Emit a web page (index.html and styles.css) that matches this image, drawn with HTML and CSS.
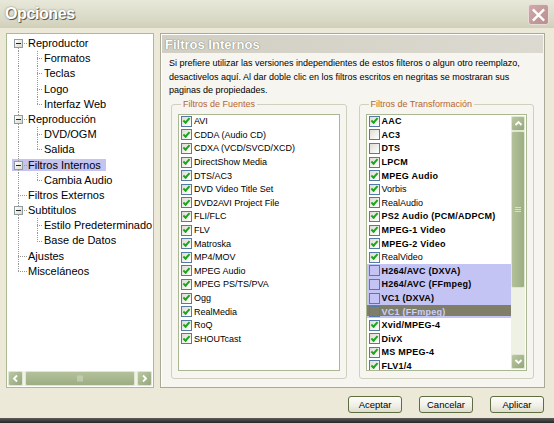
FILE: index.html
```html
<!DOCTYPE html>
<html lang="es">
<head>
    <meta charset="UTF-8">
    <title>Opciones</title>
    <link rel="stylesheet" href="styles.css">
</head>
<body>
    <div class="window">
        <div class="titlebar">
            <span class="title">Opciones</span>
            <button class="close" title="Cerrar">
                <svg width="20" height="20" viewBox="0 0 20 20"><path d="M5 5 L15 15 M15 5 L5 15" stroke="#fff" stroke-width="2.6" stroke-linecap="square"/></svg>
            </button>
        </div>

        <div class="client">
            <div class="main">
                <!-- arbol de paginas -->
                <div class="tree-panel">
                    <div class="tree">
                        <div class="node"><span class="rc first"><span class="exp"></span></span><span class="label">Reproductor</span></div>
                        <div class="node"><span class="rc pass"></span><span class="cc mid"></span><span class="label">Formatos</span></div>
                        <div class="node"><span class="rc pass"></span><span class="cc mid"></span><span class="label">Teclas</span></div>
                        <div class="node"><span class="rc pass"></span><span class="cc mid"></span><span class="label">Logo</span></div>
                        <div class="node"><span class="rc pass"></span><span class="cc last"></span><span class="label">Interfaz Web</span></div>
                        <div class="node"><span class="rc mid"><span class="exp"></span></span><span class="label">Reproducción</span></div>
                        <div class="node"><span class="rc pass"></span><span class="cc mid"></span><span class="label">DVD/OGM</span></div>
                        <div class="node"><span class="rc pass"></span><span class="cc last"></span><span class="label">Salida</span></div>
                        <div class="node sel"><span class="rc mid"><span class="exp"></span></span><span class="label">Filtros Internos</span></div>
                        <div class="node"><span class="rc pass"></span><span class="cc last"></span><span class="label">Cambia Audio</span></div>
                        <div class="node"><span class="rc mid"></span><span class="label">Filtros Externos</span></div>
                        <div class="node"><span class="rc mid"><span class="exp"></span></span><span class="label">Subtitulos</span></div>
                        <div class="node"><span class="rc pass"></span><span class="cc mid"></span><span class="label">Estilo Predeterminado</span></div>
                        <div class="node"><span class="rc pass"></span><span class="cc last"></span><span class="label">Base de Datos</span></div>
                        <div class="node"><span class="rc mid"></span><span class="label">Ajustes</span></div>
                        <div class="node"><span class="rc last"></span><span class="label">Misceláneos</span></div>
                    </div>
                    <div class="hscroll">
                        <span class="sb-btn"><svg width="9" height="9" viewBox="0 0 9 9"><path d="M6 1.5 L3 4.5 L6 7.5" fill="none" stroke="#fff" stroke-width="1.8"/></svg></span>
                        <span class="sb-thumb h"><span class="grip"></span></span>
                        <span class="sb-btn"><svg width="9" height="9" viewBox="0 0 9 9"><path d="M3 1.5 L6 4.5 L3 7.5" fill="none" stroke="#fff" stroke-width="1.8"/></svg></span>
                    </div>
                </div>

                <!-- pagina actual -->
                <div class="page">
                    <div class="page-head">Filtros Internos</div>
                    <p class="desc">Si prefiere utilizar las versiones independientes de estos filteros o algun otro reemplazo, desactivelos aquí. Al dar doble clic en los filtros escritos en negritas se mostraran sus paginas de propiedades.</p>
                    <div class="groups">
                        <fieldset class="group">
                            <legend>Filtros de Fuentes</legend>
                            <div class="listbox">
                                <ul class="checklist">
                                    <li><span class="cb on"></span>AVI</li>
                                    <li><span class="cb on"></span>CDDA (Audio CD)</li>
                                    <li><span class="cb on"></span>CDXA (VCD/SVCD/XCD)</li>
                                    <li><span class="cb on"></span>DirectShow Media</li>
                                    <li><span class="cb on"></span>DTS/AC3</li>
                                    <li><span class="cb on"></span>DVD Video Title Set</li>
                                    <li><span class="cb on"></span>DVD2AVI Project File</li>
                                    <li><span class="cb on"></span>FLI/FLC</li>
                                    <li><span class="cb on"></span>FLV</li>
                                    <li><span class="cb on"></span>Matroska</li>
                                    <li><span class="cb on"></span>MP4/MOV</li>
                                    <li><span class="cb on"></span>MPEG Audio</li>
                                    <li><span class="cb on"></span>MPEG PS/TS/PVA</li>
                                    <li><span class="cb on"></span>Ogg</li>
                                    <li><span class="cb on"></span>RealMedia</li>
                                    <li><span class="cb on"></span>RoQ</li>
                                    <li><span class="cb on"></span>SHOUTcast</li>
                                </ul>
                            </div>
                        </fieldset>
                        <fieldset class="group">
                            <legend>Filtros de Transformación</legend>
                            <div class="listbox">
                                <ul class="checklist">
                                    <li class="b"><span class="cb on"></span>AAC</li>
                                    <li class="b"><span class="cb"></span>AC3</li>
                                    <li class="b"><span class="cb"></span>DTS</li>
                                    <li class="b"><span class="cb on"></span>LPCM</li>
                                    <li class="b"><span class="cb on"></span>MPEG Audio</li>
                                    <li><span class="cb on"></span>Vorbis</li>
                                    <li><span class="cb on"></span>RealAudio</li>
                                    <li class="b"><span class="cb on"></span>PS2 Audio (PCM/ADPCM)</li>
                                    <li class="b"><span class="cb on"></span>MPEG-1 Video</li>
                                    <li class="b"><span class="cb on"></span>MPEG-2 Video</li>
                                    <li><span class="cb on"></span>RealVideo</li>
                                    <li class="b sel"><span class="cb"></span>H264/AVC (DXVA)</li>
                                    <li class="b sel"><span class="cb"></span>H264/AVC (FFmpeg)</li>
                                    <li class="b sel"><span class="cb"></span>VC1 (DXVA)</li>
                                    <li class="b sel cur"><span class="cb"></span>VC1 (FFmpeg)</li>
                                    <li class="b"><span class="cb on"></span>Xvid/MPEG-4</li>
                                    <li class="b"><span class="cb on"></span>DivX</li>
                                    <li class="b"><span class="cb on"></span>MS MPEG-4</li>
                                    <li class="b"><span class="cb on"></span>FLV1/4</li>
                                </ul>
                                <div class="vscroll">
                                    <span class="sb-btn"><svg width="9" height="9" viewBox="0 0 9 9"><path d="M1.5 6 L4.5 3 L7.5 6" fill="none" stroke="#fff" stroke-width="1.8"/></svg></span>
                                    <span class="sb-thumb v"><span class="grip"></span></span>
                                    <span class="sb-track"></span>
                                    <span class="sb-btn"><svg width="9" height="9" viewBox="0 0 9 9"><path d="M1.5 3 L4.5 6 L7.5 3" fill="none" stroke="#fff" stroke-width="1.8"/></svg></span>
                                </div>
                            </div>
                        </fieldset>
                    </div>
                </div>
            </div>

            <div class="buttons">
                <button class="btn">Aceptar</button>
                <button class="btn">Cancelar</button>
                <button class="btn">Aplicar</button>
            </div>
        </div>
        <div class="frame-bottom"></div>
    </div>
</body>
</html>
```

FILE: styles.css
```css
body {
    margin: 0;
    width: 554px;
    height: 423px;
    overflow: hidden;
    font-family: "Liberation Sans", Arial, sans-serif;
    color: #000;
}

.window {
    display: flex;
    flex-direction: column;
    height: 423px;
    background-color: #ece9d8;
}

/* barra de titulo */
.titlebar {
    height: 28px;
    flex: none;
    display: flex;
    align-items: center;
    justify-content: space-between;
    padding: 0 5px 0 5px;
    background: linear-gradient(#e8e8da, #d9d9c6 70%, #cfcfb9);
}

.title {
    font-size: 16px;
    font-weight: bold;
    letter-spacing: -0.4px;
    color: #fff;
    text-shadow: 1px 1px 0 #5e5e4c, 0 0 2px #7a7a66;
}

.close {
    width: 21px;
    height: 21px;
    padding: 0;
    margin-top: 1px;
    display: flex;
    align-items: center;
    justify-content: center;
    background: linear-gradient(135deg, #cfa9a9, #b98e8e);
    border: 1px solid #eadada;
    border-radius: 3px;
}

.client {
    flex: 1;
    display: flex;
    flex-direction: column;
    padding: 5px 9px 5px 6px;
}

.main {
    height: 355px;
    display: flex;
    gap: 6px;
}

/* arbol */
.tree-panel {
    width: 148px;
    box-sizing: border-box;
    display: flex;
    flex-direction: column;
    background-color: #fff;
    border: 1px solid #abbb94;
}

.tree {
    --v: repeating-linear-gradient(#999 0 1px, transparent 1px 2px);
    --h: repeating-linear-gradient(90deg, #999 0 1px, transparent 1px 2px);
    flex: 1;
    padding: 2px 0 0 5px;
}

.node {
    height: 15.2px;
    display: flex;
    align-items: stretch;
    font-size: 11px;
    line-height: 15.2px;
    white-space: nowrap;
}

.node.sel {
    background: linear-gradient(#c4c4ef, #c4c4ef) 0 50% / 94px 12px no-repeat;
}

.label {
    padding-left: 1px;
}

.rc, .cc {
    flex: none;
    display: flex;
    align-items: center;
    background-repeat: no-repeat;
}

.rc { width: 15px; }
.cc { width: 16px; }

.rc.first {
    background-image: var(--v), var(--h);
    background-size: 1px 50%, 9px 1px;
    background-position: 6px 100%, 6px 50%;
}

.rc.mid {
    background-image: var(--v), var(--h);
    background-size: 1px 100%, 9px 1px;
    background-position: 6px 0, 6px 50%;
}

.rc.last {
    background-image: var(--v), var(--h);
    background-size: 1px 50%, 9px 1px;
    background-position: 6px 0, 6px 50%;
}

.rc.pass {
    background-image: var(--v);
    background-size: 1px 100%;
    background-position: 6px 0;
}

.cc.mid {
    background-image: var(--v), var(--h);
    background-size: 1px 100%, 6px 1px;
    background-position: 10px 0, 10px 50%;
}

.cc.last {
    background-image: var(--v), var(--h);
    background-size: 1px 50%, 6px 1px;
    background-position: 10px 0, 10px 50%;
}

.exp {
    width: 9px;
    height: 9px;
    box-sizing: border-box;
    margin-left: 2px;
    display: flex;
    align-items: center;
    justify-content: center;
    border: 1px solid #8f9b9c;
    background: linear-gradient(135deg, #fff, #d9d8cb);
}

.exp::after {
    content: "";
    width: 5px;
    height: 1px;
    background-color: #222;
}

/* barras de desplazamiento */
.hscroll {
    height: 15px;
    margin: 0 1px 1px;
    display: flex;
    background-color: #f1f2e8;
}

.sb-btn {
    width: 15px;
    height: 15px;
    flex: none;
    box-sizing: border-box;
    display: flex;
    align-items: center;
    justify-content: center;
    border: 1px solid #dfe6d3;
    border-radius: 2px;
    background: linear-gradient(135deg, #bac8a2, #96a77b);
}

.sb-thumb {
    box-sizing: border-box;
    display: flex;
    align-items: center;
    justify-content: center;
    border: 1px solid #dfe6d3;
    border-radius: 2px;
}

.sb-thumb.h {
    flex: 1;
    margin: 0 2px;
    background: linear-gradient(#b3c19b, #9dae82);
}

.sb-thumb.v {
    height: 157px;
    flex: none;
    background: linear-gradient(90deg, #b3c19b, #9dae82);
}

.grip {
    width: 6px;
    height: 5px;
    border-top: 1px solid #d7dfc9;
    border-bottom: 1px solid #d7dfc9;
    box-sizing: border-box;
    background: linear-gradient(#d7dfc9, #d7dfc9) 0 50% / 100% 1px no-repeat;
}

.sb-thumb.h .grip {
    transform: rotate(90deg);
}

.sb-track {
    flex: 1;
}

/* pagina derecha */
.page {
    flex: 1;
    display: flex;
    flex-direction: column;
    background-color: #f6f5f0;
    border: 1px solid #aaa897;
    box-shadow: inset 1px 1px 0 #fff;
}

.page-head {
    height: 18px;
    margin: 1px 1px 0;
    padding-left: 3px;
    font-size: 13px;
    font-weight: bold;
    line-height: 19px;
    color: #fff;
    text-shadow: 0 0 1px #7c7b70, 0 0 1px #7c7b70;
    background: linear-gradient(90deg, #d1cfc3, #dcdad0);
}

.desc {
    margin: 4px 10px 0 8px;
    font-size: 9px;
    line-height: 13.5px;
}

.groups {
    flex: 1;
    min-height: 0;
    display: flex;
    gap: 12px;
    margin-top: 1px;
    padding: 0 10px 8px;
}

.group {
    flex: 1;
    min-width: 0;
    margin: 0;
    padding: 4px 6px 7px;
    display: flex;
    flex-direction: column;
    border: 1px solid #d0d0bf;
    border-radius: 3px;
}

.group legend {
    margin-left: 3px;
    padding: 0 2px;
    font-size: 9px;
    line-height: 11px;
    color: #b8652b;
}

.listbox {
    flex: 1;
    min-height: 0;
    display: flex;
    background-color: #fff;
    border: 1px solid #a9b893;
}

.checklist {
    flex: 1;
    margin: 0;
    padding: 0;
    list-style: none;
    overflow: hidden;
}

.checklist li {
    height: 13.6px;
    display: flex;
    align-items: center;
    font-size: 9px;
    white-space: nowrap;
}

.checklist li.b {
    font-weight: bold;
    letter-spacing: 0.25px;
}

.checklist li.sel {
    background-color: #c3c3f4;
}

.checklist li.cur {
    background-color: #7f7e69;
    box-shadow: inset 0 -2px 0 #c3c3f4;
    color: #cfcff7;
}

.cb {
    width: 11px;
    height: 11px;
    flex: none;
    box-sizing: border-box;
    margin: 0 2px;
    display: flex;
    align-items: center;
    justify-content: center;
    border: 1px solid #557aa3;
    background: linear-gradient(135deg, #dedcd3, #fff);
}

.sel .cb {
    background: transparent;
}

.cb.on::after {
    content: "";
    width: 5px;
    height: 2px;
    border-left: 2px solid #1ea51e;
    border-bottom: 2px solid #1ea51e;
    transform: translate(0, -1px) rotate(-48deg);
}

.vscroll {
    width: 14px;
    flex: none;
    margin: 1px 1px 1px 0;
    display: flex;
    flex-direction: column;
    background-color: #eff1e5;
}

.vscroll .sb-btn {
    width: 14px;
}

/* botones */
.buttons {
    display: flex;
    justify-content: flex-end;
    gap: 17px;
    margin-top: 8px;
    padding-right: 1px;
}

.btn {
    width: 54px;
    height: 17px;
    padding: 0;
    font-family: "Liberation Sans", Arial, sans-serif;
    font-size: 9.5px;
    color: #000;
    border: 1px solid #5e6e42;
    border-radius: 3px;
    background: linear-gradient(#fdfdf9, #f0efe6 60%, #dedcca);
}

.frame-bottom {
    height: 5px;
    flex: none;
    background: linear-gradient(#5c5c5c, #262626);
}
```
